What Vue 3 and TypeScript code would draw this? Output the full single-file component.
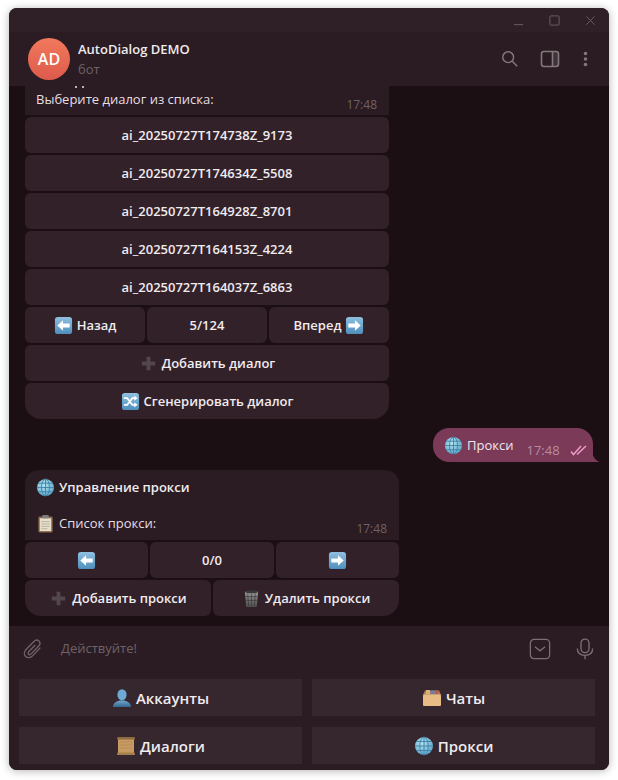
<template>
  <div class="page">
    <svg class="defs" width="0" height="0">
      <defs>
        <linearGradient id="g-blue" x1="0" y1="0" x2="0" y2="1">
          <stop offset="0" stop-color="#8fc0e0" />
          <stop offset="1" stop-color="#4f8fbd" />
        </linearGradient>
        <radialGradient id="g-globe" cx="0.4" cy="0.35" r="0.8">
          <stop offset="0" stop-color="#b5e2ee" />
          <stop offset="1" stop-color="#4f9fc4" />
        </radialGradient>
        <linearGradient id="g-bust" x1="0" y1="0" x2="0" y2="1">
          <stop offset="0" stop-color="#6fa6cf" />
          <stop offset="1" stop-color="#34688f" />
        </linearGradient>
        <linearGradient id="g-trash" x1="0" y1="0" x2="0" y2="1">
          <stop offset="0" stop-color="#9a9a9a" />
          <stop offset="1" stop-color="#4d4d4d" />
        </linearGradient>
      </defs>
      <symbol id="e-left" viewBox="0 0 20 20">
        <rect x="1" y="1" width="18" height="18" rx="3" fill="url(#g-blue)" />
        <path d="M3.5 10 9.5 4.5V8H16.5V12H9.5V15.5Z" fill="#fff" />
      </symbol>
      <symbol id="e-right" viewBox="0 0 20 20">
        <rect x="1" y="1" width="18" height="18" rx="3" fill="url(#g-blue)" />
        <path d="M16.5 10 10.5 4.5V8H3.5V12H10.5V15.5Z" fill="#fff" />
      </symbol>
      <symbol id="e-plus" viewBox="0 0 20 20">
        <path d="M8 3H12V8H17V12H12V17H8V12H3V8H8Z" fill="#51474c" />
      </symbol>
      <symbol id="e-shuffle" viewBox="0 0 20 20">
        <rect x="1" y="1" width="18" height="18" rx="3" fill="url(#g-blue)" />
        <path d="M3 6.5H6.5L12 13.5H14.5M3 13.5H6.5L12 6.5H14.5" fill="none" stroke="#fff" stroke-width="1.8" />
        <path d="M14 3.8 17.5 6.5 14 9.2ZM14 10.8 17.5 13.5 14 16.2Z" fill="#fff" />
      </symbol>
      <symbol id="e-globe" viewBox="0 0 20 20">
        <circle cx="10" cy="10" r="9" fill="url(#g-globe)" />
        <g fill="none" stroke="#3b7fa6" stroke-width="0.9">
          <ellipse cx="10" cy="10" rx="4.2" ry="9" />
          <path d="M10 1V19M1 10H19M2.4 5.5H17.6M2.4 14.5H17.6" />
        </g>
      </symbol>
      <symbol id="e-clipboard" viewBox="0 0 20 20">
        <rect x="2.5" y="2.5" width="15" height="17" rx="1.5" fill="#8a6a4a" />
        <rect x="4" y="4.5" width="12" height="13.5" fill="#e6dfca" />
        <rect x="6.5" y="1" width="7" height="3.5" rx="1" fill="#7d7d7d" />
        <path d="M5.5 8H14.5M5.5 10.5H14.5M5.5 13H14.5M5.5 15.5H12" stroke="#b5ad98" stroke-width="0.9" />
      </symbol>
      <symbol id="e-trash" viewBox="0 0 20 20">
        <path d="M3 2.5H17L15.5 19H4.5Z" fill="url(#g-trash)" />
        <ellipse cx="10" cy="3" rx="7" ry="1.6" fill="#3a3a3a" />
        <path d="M6 5 7 18M10 5V18M14 5 13 18M4 8H16M4.4 12H15.6" stroke="#2f2f2f" stroke-width="0.6" />
      </symbol>
      <symbol id="e-bust" viewBox="0 0 20 20">
        <ellipse cx="10" cy="6.8" rx="4.6" ry="5.6" fill="#6ea9d4" />
        <path d="M1 19C1 14.5 5 13.5 7.5 12.5H12.5C15 13.5 19 14.5 19 19Z" fill="url(#g-bust)" />
      </symbol>
      <symbol id="e-box" viewBox="0 0 20 20">
        <path d="M3 2.5H17L19 7H1Z" fill="#a8865e" />
        <rect x="4" y="2" width="4" height="4" fill="#e0b070" />
        <rect x="8.5" y="2.5" width="4" height="3.5" fill="#6a7fb0" />
        <rect x="13" y="2.5" width="3.5" height="3.5" fill="#c05a50" />
        <rect x="1" y="6.5" width="18" height="11.5" rx="1" fill="#e8bd85" />
      </symbol>
      <symbol id="e-scroll" viewBox="0 0 20 20">
        <rect x="2" y="2" width="16" height="16" fill="#c79a62" />
        <rect x="1" y="1" width="18" height="2.6" rx="1.2" fill="#8d6a40" />
        <rect x="1" y="16.5" width="18" height="2.6" rx="1.2" fill="#a67f4e" />
        <path d="M4 6H16M4 9H16M4 12H16" stroke="#b58a55" stroke-width="0.8" />
      </symbol>
    </svg>

    <div class="window">
      <div class="titlebar">
        <svg class="win-icon" viewBox="0 0 12 12"><path d="M1 10.5H11" /></svg>
        <svg class="win-icon" viewBox="0 0 12 12"><rect x="1" y="1" width="10" height="10" rx="1" /></svg>
        <svg class="win-icon" viewBox="0 0 12 12"><path d="M1.5 1.5 10.5 10.5M10.5 1.5 1.5 10.5" /></svg>
      </div>

      <header class="header">
        <div class="avatar">AD</div>
        <div class="peer">
          <div class="peer-name">AutoDialog DEMO</div>
          <div class="peer-status">бот</div>
        </div>
        <svg class="head-icon search" viewBox="0 0 20 20">
          <circle cx="8" cy="8" r="6" />
          <path d="M12.5 12.5 18 18" />
        </svg>
        <svg class="head-icon panel" viewBox="0 0 20 20">
          <rect x="1.5" y="2.5" width="17" height="15" rx="2.5" />
          <path d="M12.5 2.5V17.5" />
          <rect x="12.5" y="2.5" width="6" height="15" rx="1" class="panel-fill" />
        </svg>
        <svg class="head-icon dots" viewBox="0 0 6 20">
          <circle cx="3" cy="3" r="2.2" />
          <circle cx="3" cy="10" r="2.2" />
          <circle cx="3" cy="17" r="2.2" />
        </svg>
      </header>

      <main class="chat">
        <i class="clip-dot first"></i>
        <i class="clip-dot second"></i>

        <section class="incoming list-msg">
          <div class="bubble top-cut">
            <span class="line">Выберите диалог из списка:</span>
            <span class="time">17:48</span>
          </div>
          <div class="keys">
            <div v-for="(row, r) in listRows" :key="r" class="key-row">
              <button v-for="b in row" :key="b.text + b.icon" class="key">
                <svg v-if="b.icon && !b.after" class="emoji"><use :href="'#e-' + b.icon" /></svg>
                <span v-if="b.text">{{ b.text }}</span>
                <svg v-if="b.icon && b.after" class="emoji"><use :href="'#e-' + b.icon" /></svg>
              </button>
            </div>
          </div>
        </section>

        <section class="outgoing">
          <svg class="emoji"><use href="#e-globe" /></svg>
          <span class="out-text">Прокси</span>
          <span class="out-time">17:48</span>
          <svg class="ticks" viewBox="0 0 18 12">
            <path d="M1 7.5 3.5 10.5 11 2M7 10.5 16 2" />
          </svg>
          <svg class="tail" viewBox="0 0 8 10"><path d="M0 0C1 5 4 9 8 10H0Z" /></svg>
        </section>

        <section class="incoming proxy-msg">
          <div class="bubble rounded-top">
            <div class="proxy-line strong">
              <svg class="emoji"><use href="#e-globe" /></svg>
              <span>Управление прокси</span>
            </div>
            <div class="proxy-line list-line">
              <svg class="emoji"><use href="#e-clipboard" /></svg>
              <span>Список прокси:</span>
            </div>
            <span class="time">17:48</span>
          </div>
          <div class="keys">
            <div v-for="(row, r) in proxyRows" :key="r" class="key-row">
              <button v-for="b in row" :key="b.text + b.icon" class="key">
                <svg v-if="b.icon" class="emoji"><use :href="'#e-' + b.icon" /></svg>
                <span v-if="b.text">{{ b.text }}</span>
              </button>
            </div>
          </div>
        </section>
      </main>

      <footer class="compose">
        <div class="input-row">
          <svg class="clip" viewBox="0 0 24 24">
            <path d="M20 10.5 11.5 19.5C9.2 21.9 5.8 22 3.9 20.1 2 18.2 2.2 15 4.4 12.6L13 3.8C14.6 2.1 17 1.9 18.5 3.3 20 4.8 19.8 7.1 18.2 8.8L10 17.3C9 18.3 7.8 18.4 7.1 17.7 6.4 17 6.6 15.8 7.5 14.8L14.5 7.6" />
          </svg>
          <span class="placeholder">Действуйте!</span>
          <svg class="kbd-toggle" viewBox="0 0 24 24">
            <rect x="1.5" y="1.5" width="21" height="21" rx="4" />
            <path d="M6.5 9.5 12 14 17.5 9.5" />
          </svg>
          <svg class="mic" viewBox="0 0 20 24">
            <rect x="5.5" y="1" width="9" height="15" rx="4.5" />
            <path d="M1.5 11.5C1.5 16.5 5 19 10 19S18.5 16.5 18.5 11.5M10 19V23.5" />
          </svg>
        </div>
        <div class="reply-grid">
          <button v-for="b in replyKeys" :key="b.text" class="reply-key">
            <svg class="emoji big"><use :href="'#e-' + b.icon" /></svg>
            <span>{{ b.text }}</span>
          </button>
        </div>
      </footer>
    </div>
  </div>
</template>

<script setup lang="ts">
interface KeyBtn {
  text: string
  icon?: string
  after?: boolean
}

const listRows: KeyBtn[][] = [
  [{ text: 'ai_20250727T174738Z_9173' }],
  [{ text: 'ai_20250727T174634Z_5508' }],
  [{ text: 'ai_20250727T164928Z_8701' }],
  [{ text: 'ai_20250727T164153Z_4224' }],
  [{ text: 'ai_20250727T164037Z_6863' }],
  [
    { text: 'Назад', icon: 'left' },
    { text: '5/124' },
    { text: 'Вперед', icon: 'right', after: true }
  ],
  [{ text: 'Добавить диалог', icon: 'plus' }],
  [{ text: 'Сгенерировать диалог', icon: 'shuffle' }]
]

const proxyRows: KeyBtn[][] = [
  [{ text: '', icon: 'left' }, { text: '0/0' }, { text: '', icon: 'right' }],
  [
    { text: 'Добавить прокси', icon: 'plus' },
    { text: 'Удалить прокси', icon: 'trash' }
  ]
]

const replyKeys: KeyBtn[] = [
  { text: 'Аккаунты', icon: 'bust' },
  { text: 'Чаты', icon: 'box' },
  { text: 'Диалоги', icon: 'scroll' },
  { text: 'Прокси', icon: 'globe' }
]
</script>

<style>
html,
body {
  margin: 0;
  background: #fff;
}
</style>

<style scoped>
.page {
  width: 618px;
  height: 780px;
  padding: 8px 9px 10px 9px;
  box-sizing: border-box;
  font-family: "Open Sans", "Noto Sans", sans-serif;
  color: #efe9ec;
}

.defs {
  position: absolute;
}

.window {
  width: 600px;
  height: 762px;
  display: flex;
  flex-direction: column;
  border-radius: 8px;
  overflow: hidden;
  background: #2a1c22;
  box-shadow: 0 1px 8px rgba(0, 0, 0, 0.3);
}

.titlebar {
  height: 24px;
  flex: none;
  display: flex;
  justify-content: flex-end;
  align-items: center;
  gap: 25px;
  padding: 0 13px 0 0;
  background: #2e2026;
}

.win-icon {
  width: 11px;
  height: 11px;
  fill: none;
  stroke: #6f6267;
  stroke-width: 1;
}

.header {
  height: 54px;
  flex: none;
  display: flex;
  align-items: center;
  padding: 0 21px 0 19px;
  background: #2a1c22;
}

.avatar {
  width: 42px;
  height: 42px;
  border-radius: 50%;
  display: flex;
  align-items: center;
  justify-content: center;
  background: linear-gradient(#f1795c, #dd5a4c);
  color: #fff;
  font-size: 16px;
  font-weight: 600;
}

.peer {
  margin-left: 8px;
  flex: 1;
  align-self: flex-start;
  padding-top: 8px;
}

.peer-name {
  font-size: 13px;
  line-height: 18px;
  font-weight: 600;
  color: #f0ebee;
}

.peer-status {
  margin-top: 2px;
  font-size: 13px;
  line-height: 18px;
  color: #6f6267;
}

.head-icon {
  fill: none;
  stroke: #84787d;
  stroke-width: 1.6;
}

.search {
  width: 18px;
  height: 18px;
}

.panel {
  width: 20px;
  height: 20px;
  margin-left: 21px;
}

.panel-fill {
  fill: #84787d;
  stroke: none;
  opacity: 0.25;
}

.dots {
  width: 5px;
  height: 16px;
  margin-left: 23px;
  fill: #84787d;
  stroke: none;
}

.chat {
  height: 540px;
  flex: none;
  position: relative;
  box-sizing: border-box;
  padding-left: 16px;
  overflow: hidden;
  background: #1c0f14;
}

.clip-dot {
  position: absolute;
  top: 0;
  width: 2px;
  height: 2px;
  background: #b9b1b5;
  z-index: 1;
}

.clip-dot.first {
  left: 66px;
}

.clip-dot.second {
  left: 73px;
}

.incoming {
  display: flex;
  flex-direction: column;
}

.list-msg {
  width: 364px;
}

.proxy-msg {
  width: 374px;
  margin-top: 8px;
}

.bubble {
  position: relative;
  box-sizing: border-box;
  background: #2b1b22;
  font-size: 13px;
  font-weight: 400;
}

.top-cut {
  height: 29px;
  padding: 4px 11px 0;
  line-height: 18px;
}

.rounded-top {
  height: 70px;
  border-radius: 14px 14px 0 0;
  padding: 8px 11px 0;
}

.line {
  display: block;
  color: #e6dfe2;
}

.time {
  position: absolute;
  right: 12px;
  bottom: 3px;
  font-size: 12px;
  line-height: 16px;
  color: #6f6267;
}

.top-cut .time {
  bottom: 2px;
}

.proxy-line {
  display: flex;
  align-items: center;
  gap: 4px;
  height: 18px;
  color: #e6dfe2;
}

.proxy-line.strong {
  font-weight: 600;
  color: #f0ebee;
}

.list-line {
  margin-top: 18px;
}

.keys {
  display: flex;
  flex-direction: column;
  gap: 2px;
  margin-top: 2px;
}

.key-row {
  display: flex;
  gap: 2px;
}

.key {
  flex: 1 1 0;
  min-width: 0;
  height: 36px;
  display: flex;
  align-items: center;
  justify-content: center;
  gap: 4px;
  padding: 0;
  border: none;
  border-radius: 6px;
  background: #33212a;
  color: #f0ebee;
  font-family: inherit;
  font-size: 13px;
  font-weight: 600;
}

.key-row:last-child .key:first-child {
  border-bottom-left-radius: 16px;
}

.key-row:last-child .key:last-child {
  border-bottom-right-radius: 16px;
}

.emoji {
  width: 19px;
  height: 19px;
  flex: none;
}

.emoji.big {
  width: 20px;
  height: 20px;
}

.outgoing {
  position: relative;
  width: 160px;
  height: 34px;
  box-sizing: border-box;
  margin: 9px 0 0 408px;
  padding: 0 0 0 11px;
  display: flex;
  align-items: center;
  border-radius: 16px 16px 0 16px;
  background: #7a3a58;
  font-size: 13px;
}

.out-text {
  margin-left: 4px;
  color: #f1e6ec;
}

.out-time {
  margin: 9px 0 0 13px;
  font-size: 13px;
  color: #b98aa2;
}

.ticks {
  width: 18px;
  height: 12px;
  margin: 9px 0 0 10px;
  fill: none;
  stroke: #f09ac8;
  stroke-width: 1.5;
}

.tail {
  position: absolute;
  right: -7px;
  bottom: 0;
  width: 8px;
  height: 10px;
  fill: #7a3a58;
}

.compose {
  flex: 1;
  background: #2a1c22;
}

.input-row {
  height: 46px;
  box-sizing: border-box;
  display: flex;
  align-items: center;
  padding: 0 15px 0 13px;
}

.clip {
  width: 22px;
  height: 24px;
  fill: none;
  stroke: #6f6267;
  stroke-width: 1.5;
}

.placeholder {
  margin: 0 0 2px 17px;
  flex: 1;
  font-size: 13px;
  color: #6f6267;
}

.kbd-toggle {
  width: 22px;
  height: 22px;
  fill: none;
  stroke: #7b6f74;
  stroke-width: 1.4;
}

.mic {
  width: 18px;
  height: 24px;
  margin-left: 25px;
  fill: none;
  stroke: #7b6f74;
  stroke-width: 1.5;
}

.reply-grid {
  display: grid;
  grid-template-columns: 283px 283px;
  grid-auto-rows: 37px;
  column-gap: 10px;
  row-gap: 11px;
  padding: 7px 0 0 10px;
}

.reply-key {
  display: flex;
  align-items: center;
  justify-content: center;
  gap: 4px;
  padding: 0;
  border: none;
  background: #36262d;
  color: #f0ebee;
  font-family: inherit;
  font-size: 15px;
  font-weight: 600;
}
</style>
